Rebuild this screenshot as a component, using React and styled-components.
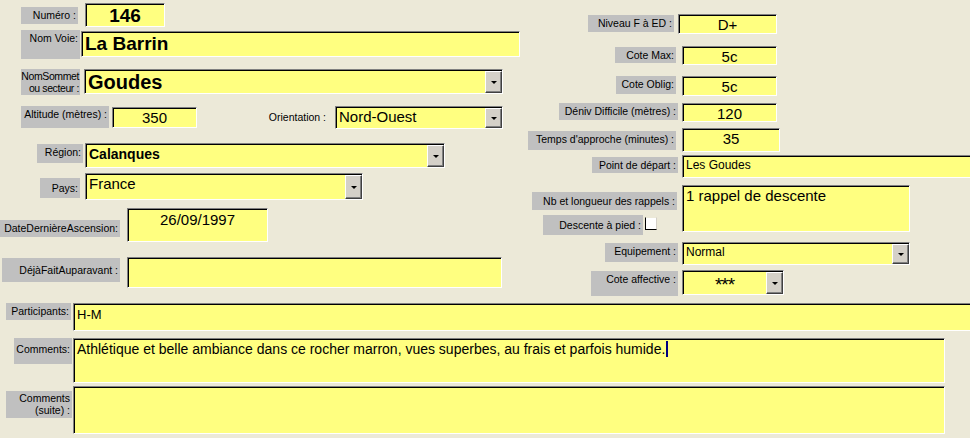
import styled, { createGlobalStyle } from 'styled-components';

const GlobalStyle = createGlobalStyle`
    html, body {
        margin: 0;
        padding: 0;
        background: #ece9d8;
    }
`;

const Form = styled.div`
    width: 970px;
    height: 438px;
    overflow: hidden;
    background: #ece9d8;
    font-family: 'Liberation Sans', Arial, sans-serif;
    color: #000;
`;

const Top = styled.div`
    display: flex;
    align-items: flex-start;
`;

const LeftCol = styled.div`
    width: 528px;
    flex-shrink: 0;
    display: flex;
    flex-direction: column;
`;

const RightCol = styled.div`
    display: flex;
    flex-direction: column;
`;

const Bottom = styled.div`
    display: flex;
    flex-direction: column;
    margin-top: 7px;
`;

const Row = styled.div`
    display: flex;
    align-items: flex-start;
    margin-top: ${p => p.$mt || 0}px;
    padding-left: ${p => p.$pl || 0}px;
`;

const Label = styled.div`
    box-sizing: border-box;
    flex-shrink: 0;
    width: ${p => p.$w}px;
    height: ${p => p.$h}px;
    margin-top: ${p => p.$dy || 0}px;
    margin-right: ${p => p.$mr || 0}px;
    padding: ${p => p.$pt ?? 2}px ${p => p.$pr ?? 2}px 0 0;
    background: #c0c0c0;
    font-size: 10.5px;
    line-height: 12px;
    letter-spacing: ${p => p.$ls || 0}px;
    text-align: right;
    white-space: pre;
    overflow: hidden;
`;

const PlainLabel = styled.div`
    box-sizing: border-box;
    width: ${p => p.$w}px;
    margin-top: ${p => p.$dy || 0}px;
    padding-right: 9px;
    font-size: 10.5px;
    line-height: 13px;
    text-align: right;
    white-space: nowrap;
`;

const LabelCell = styled.div`
    width: 150px;
    flex-shrink: 0;
    display: flex;
    flex-direction: column;
    align-items: flex-end;
`;

const Field = styled.div`
    box-sizing: border-box;
    flex-shrink: 0;
    width: ${p => p.$w}px;
    height: ${p => p.$h}px;
    margin-left: ${p => p.$ml || 0}px;
    margin-top: ${p => p.$dy || 0}px;
    padding: ${p => p.$pt ?? 1}px 3px 0 3px;
    background: #ffff80;
    border-top: 1px solid #808080;
    border-left: 1px solid #808080;
    border-right: 1px solid #fff;
    border-bottom: 1px solid #fff;
    box-shadow: inset 1px 1px 0 #000;
    font-size: ${p => p.$fs || 14}px;
    font-weight: ${p => (p.$bold ? 700 : 400)};
    line-height: ${p => (p.$fs || 14) + 3}px;
    text-align: ${p => p.$align || 'left'};
    white-space: nowrap;
    overflow: hidden;
`;

const ComboBox = styled(Field)`
    display: flex;
    padding: 0;
`;

const ComboValue = styled.div`
    flex: 1;
    padding: ${p => p.$pt ?? 1}px 3px 0 3px;
    text-align: ${p => p.$align || 'left'};
    letter-spacing: ${p => p.$ls || 0}px;
    overflow: hidden;
`;

const DropButton = styled.div`
    box-sizing: border-box;
    width: 17px;
    flex-shrink: 0;
    align-self: stretch;
    margin: 1px 0 0 0;
    display: flex;
    align-items: center;
    justify-content: center;
    background: #d4d0c8;
    border: 1px solid;
    border-color: #fff #404040 #404040 #fff;
    box-shadow: inset -1px -1px 0 #808080;

    &::after {
        content: '';
        width: 0;
        height: 0;
        border-left: 3px solid transparent;
        border-right: 3px solid transparent;
        border-top: 3px solid #000;
        margin-top: 1px;
    }
`;

const CheckRow = styled.div`
    display: flex;
    align-items: flex-start;
    margin-top: 5px;
    margin-right: 21px;
`;

const Check = styled.div`
    box-sizing: border-box;
    width: 12px;
    height: 13px;
    margin: 2px 0 0 2px;
    background: #fff;
    border-left: 1px solid #000;
    border-bottom: 1px solid #000;
    border-top: 1px solid #ece9d8;
    border-right: 1px solid #d4d0c8;
`;

const Caret = styled.span`
    display: inline-block;
    width: 2px;
    height: 16px;
    margin-left: 1px;
    vertical-align: -3px;
    background: #000080;
`;

const Combo = ({ value, align, pt, ls, ...rest }) => (
    <ComboBox {...rest}>
        <ComboValue $align={align} $pt={pt} $ls={ls}>{value}</ComboValue>
        <DropButton />
    </ComboBox>
);

const App = () => (
    <>
        <GlobalStyle />
        <Form>
            <Top>
                <LeftCol>
                    <Row $mt={3} $pl={21}>
                        <Label $w={57} $h={17} $dy={4}>Numéro :</Label>
                        <Field $ml={7} $w={80} $h={24} $fs={19} $bold $align="center">146</Field>
                    </Row>
                    <Row $mt={3} $pl={21}>
                        <Label $w={59} $h={29}>Nom Voie:</Label>
                        <Field $ml={1} $w={439} $h={26} $dy={1} $fs={19} $bold>La Barrin</Field>
                    </Row>
                    <Row $mt={10} $pl={21}>
                        <Label $w={59} $h={26} $pt={1} $pr={1} $ls={-0.4}>{'NomSommet\nou secteur :'}</Label>
                        <Combo $ml={4} $w={419} $h={25} $fs={20} $bold value="Goudes" />
                    </Row>
                    <Row $mt={11} $pl={21}>
                        <Label $w={88} $h={22}>Altitude (mètres) :</Label>
                        <Field $ml={3} $w={85} $h={21} $dy={1} $fs={15} $align="center">350</Field>
                        <PlainLabel $w={138} $dy={5}>Orientation :</PlainLabel>
                        <Combo $w={168} $h={23} $fs={15} value="Nord-Ouest" />
                    </Row>
                    <Row $mt={14} $pl={37}>
                        <Label $w={46} $h={19} $dy={1}>Région:</Label>
                        <Combo $ml={2} $w={360} $h={25} $fs={14} $bold value="Calanques" pt={2} />
                    </Row>
                    <Row $mt={5} $pl={40}>
                        <Label $w={40} $h={20} $dy={5} $pt={4}>Pays:</Label>
                        <Combo $ml={5} $w={278} $h={27} $fs={15} value="France" />
                    </Row>
                    <Row $mt={8}>
                        <Label $w={120} $h={17} $dy={12}>DateDernièreAscension:</Label>
                        <Field $ml={7} $w={141} $h={34} $fs={15} $align="center" $pt={2}>26/09/1997</Field>
                    </Row>
                    <Row $mt={15} $pl={2}>
                        <Label $w={118} $h={24} $dy={1} $pt={6}>DéjàFaitAuparavant :</Label>
                        <Field $ml={7} $w={375} $h={31} />
                    </Row>
                </LeftCol>
                <RightCol>
                    <Row $mt={14}>
                        <LabelCell>
                            <Label $w={86} $h={17} $dy={1} $mr={4}>Niveau F à ED :</Label>
                        </LabelCell>
                        <Field $w={99} $h={20} $fs={15} $align="center">D+</Field>
                    </Row>
                    <Row $mt={12}>
                        <LabelCell>
                            <Label $w={61} $h={16} $dy={1} $mr={2}>Cote Max:</Label>
                        </LabelCell>
                        <Field $ml={4} $w={95} $h={19} $fs={15} $align="center">5c</Field>
                    </Row>
                    <Row $mt={11}>
                        <LabelCell>
                            <Label $w={60} $h={18} $mr={2}>Cote Oblig:</Label>
                        </LabelCell>
                        <Field $ml={4} $w={95} $h={20} $fs={15} $align="center">5c</Field>
                    </Row>
                    <Row $mt={7}>
                        <LabelCell>
                            <Label $w={119} $h={17}>Déniv Difficile (mètres) :</Label>
                        </LabelCell>
                        <Field $ml={4} $w={95} $h={19} $fs={15} $align="center">120</Field>
                    </Row>
                    <Row $mt={6}>
                        <LabelCell>
                            <Label $w={148} $h={19} $dy={3} $mr={2}>Temps d'approche (minutes) :</Label>
                        </LabelCell>
                        <Field $ml={4} $w={98} $h={24} $fs={15} $align="center">35</Field>
                    </Row>
                    <Row $mt={3}>
                        <LabelCell>
                            <Label $w={86} $h={16} $dy={2}>Point de départ :</Label>
                        </LabelCell>
                        <Field $ml={4} $w={300} $h={23} $fs={12} $pt={2}>Les Goudes</Field>
                    </Row>
                    <Row $mt={7}>
                        <LabelCell>
                            <Label $w={145} $h={18} $dy={7} $mr={1} $pt={3}>Nb et longueur des rappels :</Label>
                            <CheckRow>
                                <Label $w={100} $h={20} $pt={4}>Descente à pied :</Label>
                                <Check />
                            </CheckRow>
                        </LabelCell>
                        <Field $ml={4} $w={228} $h={47} $fs={15}>1 rappel de descente</Field>
                    </Row>
                    <Row $mt={7}>
                        <LabelCell>
                            <Label $w={73} $h={19} $dy={1}>Equipement :</Label>
                        </LabelCell>
                        <Combo $ml={4} $w={228} $h={23} $fs={12} value="Normal" pt={2} />
                    </Row>
                    <Row $mt={5}>
                        <LabelCell>
                            <Label $w={87} $h={25} $dy={1}>Cote affective :</Label>
                        </LabelCell>
                        <Combo $ml={4} $w={102} $h={25} $fs={19} value="***" align="center" pt={3} ls={-1} />
                    </Row>
                </RightCol>
            </Top>
            <Bottom>
                <Row $pl={6}>
                    <Label $w={65} $h={17}>Participants:</Label>
                    <Field $ml={2} $w={920} $h={28} $fs={13} $pt={3}>H-M</Field>
                </Row>
                <Row $mt={7} $pl={14}>
                    <Label $w={58} $h={26} $pt={5}>Comments:</Label>
                    <Field $ml={1} $w={872} $h={45} $fs={14} $pt={2}>
                        Athlétique et belle ambiance dans ce rocher marron, vues superbes, au frais et parfois humide.
                        <Caret />
                    </Field>
                </Row>
                <Row $mt={3} $pl={6}>
                    <Label $w={66} $h={27} $dy={5} $pt={1}>{'Comments\n(suite) :'}</Label>
                    <Field $ml={1} $w={872} $h={48} />
                </Row>
            </Bottom>
        </Form>
    </>
);

export default App;
